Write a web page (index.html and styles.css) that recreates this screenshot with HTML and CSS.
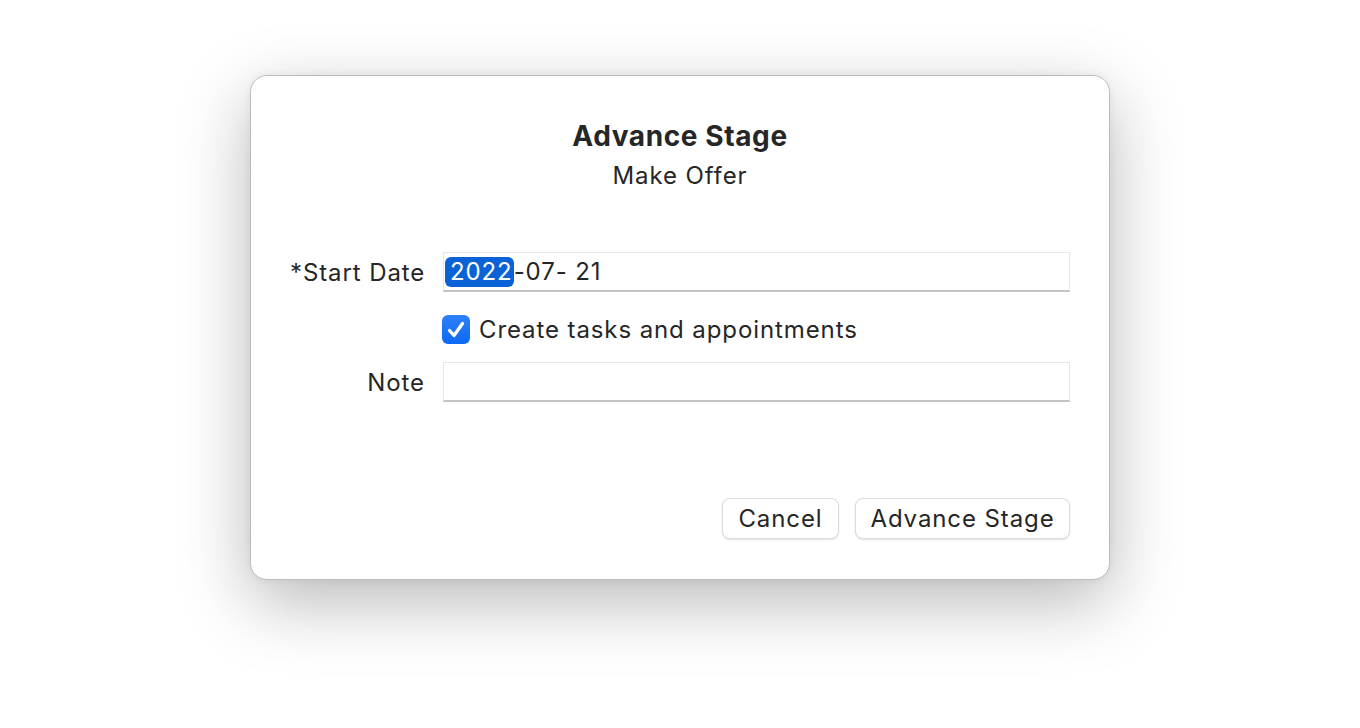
FILE: index.html
```html
<!DOCTYPE html>
<html>
<head>
<meta charset="utf-8">
<link rel="stylesheet" href="styles.css">
</head>
<body>
<div class="stage">
  <div class="dialog">
    <div class="head">
      <div class="title">Advance Stage</div>
      <div class="subtitle">Make Offer</div>
    </div>
    <div class="form">
      <label class="label">*Start Date</label>
      <div class="field"><span class="sel">2022</span>-07- 21</div>
      <div class="spacer"></div>
      <div class="check-row">
        <span class="checkbox">
          <svg width="28" height="29" viewBox="0 0 28 29"><path d="M7.5 15.5 L12 20.5 L20.5 8.5" fill="none" stroke="#fff" stroke-width="3.3" stroke-linecap="round" stroke-linejoin="round"/></svg>
        </span>
        <span class="check-label">Create tasks and appointments</span>
      </div>
      <label class="label">Note</label>
      <div class="field"></div>
    </div>
    <div class="actions">
      <button class="btn btn-cancel">Cancel</button>
      <button class="btn btn-ok">Advance Stage</button>
    </div>
  </div>
</div>
</body>
</html>
```
FILE: styles.css
```css
html, body {
  margin: 0;
  padding: 0;
  background: #ffffff;
  width: 1360px;
  height: 728px;
  overflow: hidden;
  font-family: Inter, "Noto Sans", "Liberation Sans", sans-serif;
  color: #262626;
}
.stage {
  display: flex;
  justify-content: center;
  padding-top: 75px;
}
.dialog {
  box-sizing: border-box;
  width: 860px;
  height: 505px;
  background: #ffffff;
  border: 1px solid #bdbdbd;
  border-radius: 17px;
  box-shadow: 0 22px 70px rgba(0,0,0,0.28), 0 0 8px rgba(0,0,0,0.06);
  display: flex;
  flex-direction: column;
  padding: 0 39px 0 39px;
}
.head {
  text-align: center;
  padding-top: 43px;
}
.title {
  font-size: 28px;
  font-weight: 700;
  line-height: 34px;
  letter-spacing: 0.6px;
}
.subtitle {
  font-size: 24px;
  line-height: 30px;
  margin-top: 8px;
  letter-spacing: 0.9px;
}
.form {
  display: grid;
  grid-template-columns: 135px 1fr;
  column-gap: 18px;
  row-gap: 0;
  margin-top: 61px;
  align-items: center;
}
.label {
  text-align: right;
  font-size: 24px;
  letter-spacing: 0.9px;
  white-space: nowrap;
}
.field {
  box-sizing: border-box;
  height: 40px;
  border: 1px solid #e6e6e6;
  border-bottom: 2px solid #c4c4c4;
  background: #fff;
  font-size: 24px;
  display: flex;
  align-items: center;
  padding-left: 1px;
  letter-spacing: 0.9px;
}
.sel {
  background: #0a62d6;
  color: #fff;
  border-radius: 6px;
  padding: 0 1px 1px 5px;
  letter-spacing: 0.9px;
}
.check-row {
  box-sizing: border-box;
  display: flex;
  align-items: center;
  gap: 9px;
  height: 70px;
  padding-top: 4px;
  margin-left: -1px;
}
.checkbox {
  width: 28px;
  height: 29px;
  border-radius: 6px;
  background: linear-gradient(#2f80f7, #0c68f6);
  display: flex;
  align-items: center;
  justify-content: center;
}
.check-label {
  font-size: 24px;
  letter-spacing: 0.9px;
}
.actions {
  margin-top: auto;
  margin-bottom: 40px;
  display: flex;
  justify-content: flex-end;
  gap: 16px;
}
.btn {
  font-family: inherit;
  font-size: 24px;
  color: #262626;
  background: #fff;
  border: 1px solid #dcdcdc;
  border-radius: 8px;
  height: 41px;
  padding: 0;
  box-shadow: 0 1px 2px rgba(0,0,0,0.12);
  letter-spacing: 0.9px;
}
.btn-cancel { width: 117px; }
.btn-ok { width: 215px; }
```
